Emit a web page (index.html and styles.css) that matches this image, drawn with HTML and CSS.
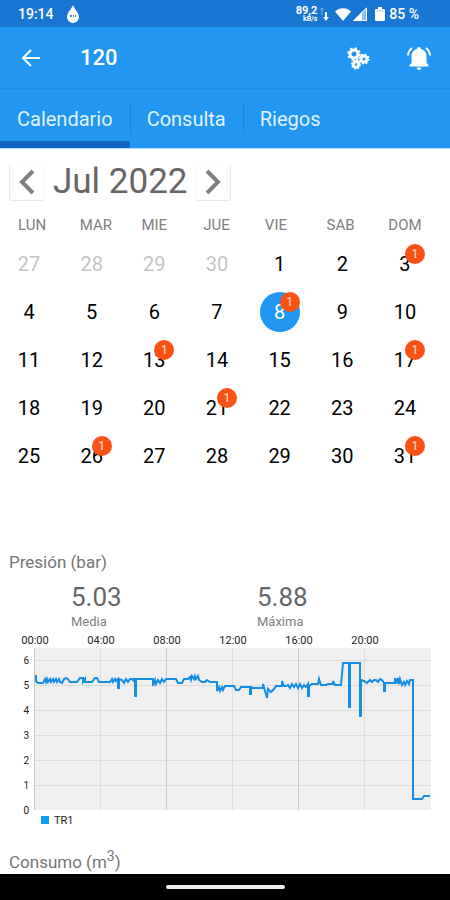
FILE: index.html
```html
<!DOCTYPE html>
<html lang="es">
<head>
<meta charset="utf-8">
<meta name="viewport" content="width=device-width, initial-scale=1">
<title>120</title>
<link rel="stylesheet" href="styles.css">
</head>
<body>
<div class="status">
  <span class="clock">19:14</span>
  <svg class="drop" viewBox="0 0 14 20" width="14" height="20"><path d="M7 1C9 6 13 8.500 13 13A6 6 0 0 1 1 13C1 8.500 5 6 7 1Z" fill="#fff"/><path d="M4 11h2v2H4zM7 11h1v2H7zM9 11h1v2H9z" fill="#4b8fc9"/></svg>
  <span class="rate"><span>89,2</span><span class="unit">kB/s</span></span>
  <svg class="arrows" viewBox="0 0 10 16" width="10" height="16"><path d="M3 9V2M1 4l2-2 2 2" stroke="#6fb0ee" fill="none"/><path d="M7 6v6" stroke="#fff" stroke-width="2"/><path d="M4 11h6l-3 4z" fill="#fff"/></svg>
  <svg class="wifi" viewBox="0 0 18 14" width="18" height="14"><path d="M1 4.500C5 0 13 0 17 4.500L9 14Z" fill="#fff"/></svg>
  <svg class="signal" viewBox="0 0 14 14" width="14" height="14"><path d="M14 0v14H0Z" fill="#8fc0ee"/><path d="M9 5v9H0Z" fill="#fff"/><path d="M13.500 1v12.500H1Z" fill="none" stroke="#fff"/></svg>
  <svg class="battery" viewBox="0 0 10 16" width="10" height="16"><path d="M3 1h4v2h2q1 0 1 1v10q0 1-1 1H1q-1 0-1-1V4q0-1 1-1h2Z" fill="#fff"/><path d="M2 5h6" stroke="#8fc0ee"/></svg>
  <span class="charge">85 %</span>
</div>
<header class="toolbar">
  <button class="icon-btn" aria-label="Atrás"><svg viewBox="0 0 20 20" width="20" height="20" fill="none" stroke="#fff" stroke-width="2"><path d="M19 10H3M10 2L2 10l8 8"/></svg></button>
  <h1>120</h1>
  <button class="icon-btn" aria-label="Ajustes"><svg viewBox="0 0 24 24" width="24" height="24" fill="none" stroke="#fff"><g stroke-width="3"><circle cx="8" cy="8" r="4"/><circle cx="18" cy="13" r="3"/><circle cx="10" cy="18.500" r="2.800"/></g><g stroke-width="2"><circle cx="8" cy="8" r="5.800" stroke-dasharray="2.200 2.350"/><circle cx="18" cy="13" r="4.600" stroke-dasharray="1.800 1.810"/><circle cx="10" cy="18.500" r="4" stroke-dasharray="1.600 1.540"/></g></svg></button>
  <button class="icon-btn" aria-label="Alertas"><svg viewBox="0 0 26 26" width="26" height="26"><path d="M13 2q2 0 2 2c4 1 5.500 4 5.500 8v6l2 2v1.500h-19V20l2-2v-6c0-4 1.500-7 5.500-8q0-2 2-2ZM10.500 22.500h5q-.5 2.500-2.500 2.500t-2.500-2.500Z" fill="#fff"/><path d="M6 3Q2.500 5.500 2 10.500M20 3q3.500 2.500 4 7.500" fill="none" stroke="#fff" stroke-width="2"/></svg></button>
</header>
<nav class="tabs">
  <a href="#calendario" class="active" aria-current="page">Calendario</a>
  <a href="#consulta">Consulta</a>
  <a href="#riegos">Riegos</a>
</nav>
<main>
  <section class="calendar" id="calendario">
    <div class="month">
      <button class="step prev" aria-label="Mes anterior"><svg viewBox="0 0 18 26" width="18" height="26"><path d="M15 2L4 13l11 11"/></svg></button>
      <h2>Jul 2022</h2>
      <button class="step next" aria-label="Mes siguiente"><svg viewBox="0 0 18 26" width="18" height="26"><path d="M3 2l11 11L3 24"/></svg></button>
    </div>
    <div class="weekdays"><span>LUN</span><span>MAR</span><span>MIE</span><span>JUE</span><span>VIE</span><span>SAB</span><span>DOM</span></div>
    <div class="days">
      <button class="out">27</button><button class="out">28</button><button class="out">29</button><button class="out">30</button><button>1</button><button>2</button><button>3<span class="badge">1</span></button>
      <button>4</button><button>5</button><button>6</button><button>7</button><button class="selected">8<span class="badge">1</span></button><button>9</button><button>10</button>
      <button>11</button><button>12</button><button>13<span class="badge">1</span></button><button>14</button><button>15</button><button>16</button><button>17<span class="badge">1</span></button>
      <button>18</button><button>19</button><button>20</button><button>21<span class="badge">1</span></button><button>22</button><button>23</button><button>24</button>
      <button>25</button><button>26<span class="badge">1</span></button><button>27</button><button>28</button><button>29</button><button>30</button><button>31<span class="badge">1</span></button>
    </div>
  </section>
  <section class="pressure">
    <h3>Presión (bar)</h3>
    <div class="stats">
      <div><strong>5.03</strong><span>Media</span></div>
      <div><strong>5.88</strong><span>Máxima</span></div>
    </div>
    <svg class="chart" viewBox="0 0 450 198" role="img" aria-label="Presión TR1">
      <rect x="34" y="16" width="397" height="162" fill="#efefef"/>
      <path class="grid" d="M34 28.500H431M34 53.500H431M34 78.500H431M34 103.500H431M34 128.500H431M34 153.500H431M100.500 16V178M232.500 16V178M364.500 16V178"/>
      <path class="grid strong" d="M34.500 16V178M166.500 16V178M298.500 16V178"/>
      <g class="xlabels"><text x="35" y="12">00:00</text><text x="101" y="12">04:00</text><text x="167" y="12">08:00</text><text x="233" y="12">12:00</text><text x="299" y="12">16:00</text><text x="365" y="12">20:00</text></g>
      <g class="ylabels"><text x="29" y="32">6</text><text x="29" y="57">5</text><text x="29" y="82">4</text><text x="29" y="107">3</text><text x="29" y="132">2</text><text x="29" y="157">1</text><text x="29" y="182">0</text></g>
      <path class="series" d="M36 43V49L38 51H43L45 47L46 50L47 47L48 50L50 47L51 50L53 47L54 50L56 47L57 50L59 47L60 50L62 51L64 47L66 46L68 47L70 50H77L80 46H83V50L85 47V50H92L95 46H97L99 50H110L112 47L113 50L115 47L116 49L118 47V56H119V47L122 48L124 51L126 47L128 50L130 47H132L134 49V47H135V64H136V47H153V54L155 48L156 52L158 48L160 51L162 47L164 50L166 47H176L178 51H182L184 47H188L190 45L191 48L192 44L194 47L195 44L196 47L198 44L199 48L202 50H205L207 48L210 50H217V59L219 55L220 59L222 55L223 58L225 54H234L236 58H239L241 55H250V62H251V55L253 56H263V52L265 59L267 66L268 57L271 60L274 57L276 54H282V49L284 54H286L288 53L290 56L292 52L294 55L296 52L298 56L300 52L302 56L304 53L306 55L308 52V64H309V54L312 52H318L319 47L321 53H326L328 52H333V49L335 53H341L343 31H349V75H350V31H360V84H361V48L364 49L367 51L370 48L372 50L374 48H376L378 50L380 47L382 48L384 51V59H385V51H395V46L397 50L398 46L399 52L400 47L402 53L404 50L405 53L407 49L409 52L410 48H413V167H422L424 164H430"/>
      <rect x="41" y="184" width="8" height="8" fill="#109bf5"/>
      <text x="54" y="192">TR1</text>
    </svg>
  </section>
  <section class="usage"><h3>Consumo (m<sup>3</sup>)</h3></section>
</main>
<footer class="navbar"><span class="handle"></span></footer>
</body>
</html>
```
FILE: styles.css
```css
* { box-sizing: border-box; }
body {
  margin: 0;
  min-height: 100vh;
  display: flex;
  flex-direction: column;
  background: #fff;
  color: #000;
  font-family: Roboto, "Liberation Sans", sans-serif;
}
button { border: 0; padding: 0; background: none; color: inherit; font: inherit; }
h1, h2, h3 { margin: 0; font-weight: 400; }
svg { display: block; flex: none; }

.status {
  display: flex;
  align-items: center;
  height: 27px;
  padding: 0 31px 0 18px;
  background: #1976d2;
  color: #fff;
  font-size: 14px;
  font-weight: 500;
}
.drop { margin-left: 12px; }
.rate {
  display: flex;
  flex-direction: column;
  align-items: flex-end;
  margin-left: auto;
  font-size: 11px;
  line-height: 10px;
  font-weight: 700;
}
.unit { font-size: 7px; line-height: 6px; }
.arrows { margin-left: 2px; }
.wifi { margin-left: 5px; }
.signal { margin-left: 1px; }
.battery { margin: 0 4px 0 8px; }

.toolbar {
  display: flex;
  align-items: center;
  height: 62px;
  padding: 0 18px 0 21px;
  background: #2196f3;
  border-bottom: 1px solid #1d8ce6;
  color: #fff;
}
.toolbar h1 { flex: 1; margin-left: 39px; font-size: 22px; font-weight: 500; }
.toolbar .icon-btn + .icon-btn { margin-left: 36px; }

.tabs { display: flex; height: 60px; background: #2196f3; border-bottom: 1px solid #b5ddfa; }
.tabs a {
  display: flex;
  align-items: center;
  padding: 8px 17px 0;
  border-bottom: 7px solid transparent;
  color: #e3f2fd;
  font-size: 20px;
  text-decoration: none;
}
.tabs a.active { border-color: #1565c0; }
.tabs a + a { background: linear-gradient(#1c83dc, #1c83dc) 0 15px / 1px 30px no-repeat; }

.month { display: flex; align-items: center; gap: 8px; padding: 14px 9px 0; color: #666; }
.month h2 { font-size: 35px; line-height: 38px; }
.step { display: grid; place-items: center; width: 36px; height: 38px; border: 1px solid #e9e9e9; border-top-color: #fafafa; border-radius: 3px; }
.prev { border-right-color: #fafafa; }
.next { border-left-color: #fafafa; }
.step path { fill: none; stroke: #808080; stroke-width: 4; }

.weekdays {
  display: grid;
  grid-template-columns: repeat(7, 1fr);
  padding: 15px 0 0 18px;
  color: #808080;
  font-size: 15px;
  line-height: 18px;
}
.days {
  display: grid;
  grid-template-columns: repeat(7, 40px);
  justify-content: space-between;
  row-gap: 8px;
  padding: 10px 25px 0 9px;
}
.days button { position: relative; height: 40px; border-radius: 50%; font-size: 20px; }
.days .out { color: #c4c4c4; }
.days .selected { background: #2196f3; color: #fff; }
.badge {
  position: absolute;
  top: 0;
  right: 0;
  width: 20px;
  height: 20px;
  border-radius: 50%;
  background: #fa5215;
  color: #ffe0d4;
  font-size: 12px;
  line-height: 20px;
}

.pressure { padding-top: 76px; }
h3 { padding-left: 9px; color: #757575; font-size: 17px; line-height: 20px; }
.stats { display: grid; grid-template-columns: 186px 1fr; padding: 10px 0 0 71px; color: #808080; }
.stats div { display: flex; flex-direction: column; }
.stats strong { color: #666; font-size: 26px; line-height: 30px; font-weight: 400; }
.stats span { font-size: 13px; line-height: 20px; }

.chart { width: 100%; height: auto; font-size: 11px; }
.chart text { fill: #222; }
.xlabels { text-anchor: middle; }
.ylabels { text-anchor: end; font-size: 10px; }
.grid { fill: none; stroke: #dcdcdc; }
.strong { stroke: #c8c8c8; }
.series { fill: none; stroke: #128ee4; stroke-width: 2; }

.usage { padding: 22px 0 1px; }
.usage sup { font-size: 14px; line-height: 0; }
.navbar { display: grid; place-items: center; height: 26px; margin-top: auto; background: #000; }
.handle { width: 119px; height: 4px; border-radius: 2px; background: #eee; }
```
